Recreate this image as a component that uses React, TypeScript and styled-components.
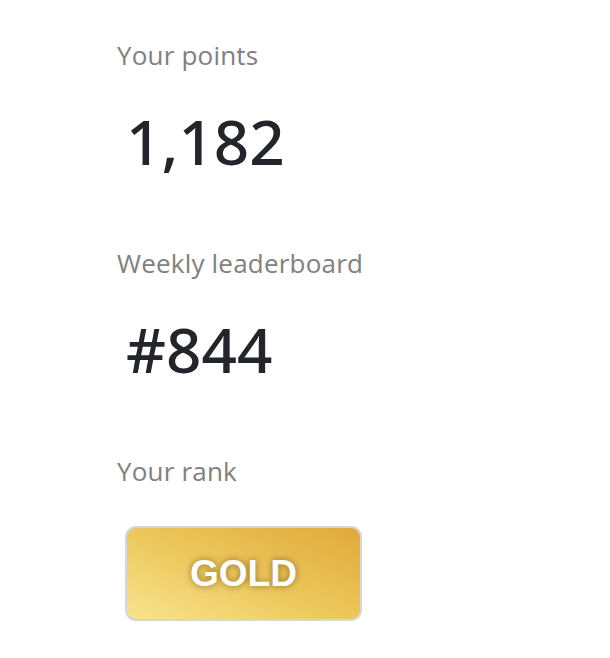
import styled, { createGlobalStyle } from "styled-components";

const Global = createGlobalStyle`
  body {
    margin: 0;
    background: #ffffff;
    font-family: "Open Sans", "Noto Sans", sans-serif;
  }
`;

const Panel = styled.div`
  padding: 35px 0 0 117px;
  display: flex;
  flex-direction: column;
`;

const Stat = styled.section`
  display: flex;
  flex-direction: column;
  margin-bottom: 62px;
`;

const Label = styled.div`
  font-size: 26px;
  font-weight: 500;
  letter-spacing: 0.2px;
  color: #808080;
  line-height: 40px;
`;

const Value = styled.div`
  margin-top: 26px;
  padding-left: 9px;
  font-family: "Noto Sans", "Liberation Sans", sans-serif;
  font-size: 62px;
  font-weight: 550;
  color: #222529;
  line-height: 80px;
`;

const Badge = styled.div`
  margin: 35px 0 0 8px;
  width: 237px;
  height: 95px;
  box-sizing: border-box;
  border: 2px solid #d6d6d6;
  border-radius: 11px;
  background: linear-gradient(22deg, #f9e38f 0%, #edc95e 45%, #e1a93a 100%);
  display: flex;
  align-items: center;
  justify-content: center;
  font-family: "Liberation Sans", Arial, sans-serif;
  font-weight: 700;
  font-size: 37px;
  color: #ffffff;
  text-shadow: 0 0 7px rgba(80, 55, 0, 0.6);
`;

const stats = [
  { label: "Your points", value: "1,182" },
  { label: "Weekly leaderboard", value: "#844" },
];

function App() {
  return (
    <>
      <Global />
      <Panel>
        {stats.map((s) => (
          <Stat key={s.label}>
            <Label>{s.label}</Label>
            <Value>{s.value}</Value>
          </Stat>
        ))}
        <Stat>
          <Label>Your rank</Label>
          <Badge>GOLD</Badge>
        </Stat>
      </Panel>
    </>
  );
}

export default App;
